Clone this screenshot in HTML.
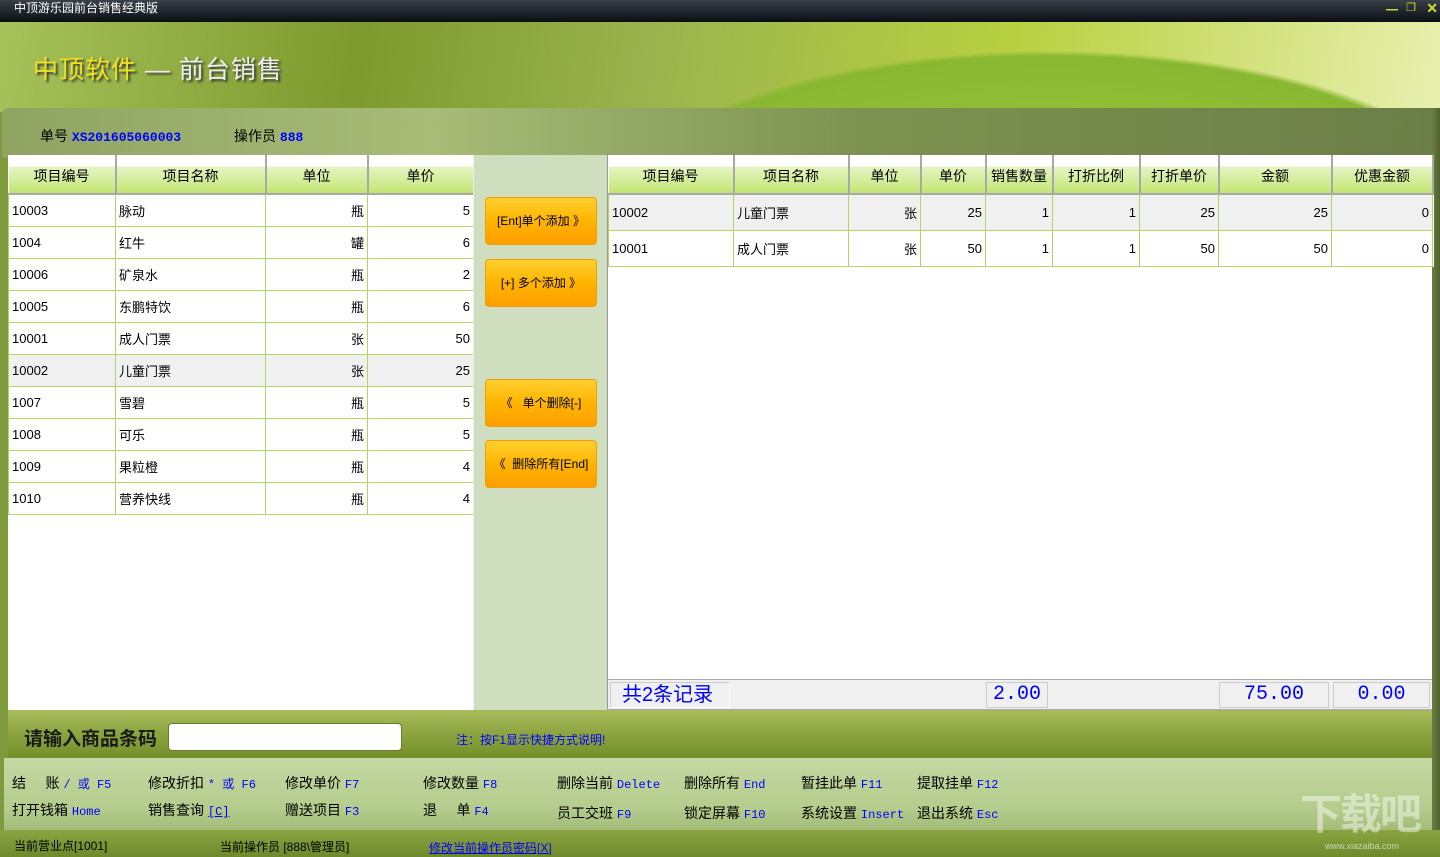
<!DOCTYPE html>
<html><head><meta charset="utf-8"><style>
*{margin:0;padding:0;box-sizing:border-box}
body{width:1440px;height:857px;overflow:hidden;position:relative;font-family:"Liberation Sans","Noto Sans CJK SC","WenQuanYi Zen Hei",sans-serif;font-size:14px;color:#000;background:#7d9a3c}
.a{position:absolute}
.title{left:0;top:0;width:1440px;height:22px;background:linear-gradient(#3a4048,#0a0e14);color:#fff;font-size:12px;line-height:16px;padding-left:14px}
.banner{left:0;top:22px;width:1440px;height:90px;background:radial-gradient(ellipse 700px 260px at 1050px 190px,#9cc83c 0,#8ab832 60%,transparent 62%),linear-gradient(100deg,#a6c25a 0,#7d9a2e 25%,#9bb34e 45%,#b8d040 70%,#e8f0b0 100%)}
.panel{left:2px;top:108px;width:1436px;height:50px;background:linear-gradient(90deg,#8ea460,#a8bc78 30%,#7d9250 60%,#6c7e48 100%);border-radius:6px 6px 0 0}
table{border-collapse:collapse;table-layout:fixed;position:absolute;background:#fff}
td{border:1px solid #b4d464;border-top:0;padding:0 3px;font-size:13px;white-space:nowrap;overflow:hidden}
th{font-weight:normal;font-size:14px;height:39px;border-right:2px solid #a8a8a8;background:linear-gradient(#fff 0,#fff 11px,#e4f4c4 12px,#cdea8c 30px,#c0e46c 39px);padding-top:4px;border-bottom:2px solid #a8a8a8}
.r{text-align:right}
.btn{position:absolute;left:485px;width:112px;height:48px;border:1px solid #f0a000;border-radius:4px;background:linear-gradient(#ffd030,#ffb400 50%,#ff9e00);font-size:12px;text-align:center;line-height:46px}
.sc{position:absolute;font-size:14px;white-space:nowrap}
.k{color:#0000ff;font-family:"Liberation Mono","Noto Sans CJK SC",monospace;font-size:12px}
</style></head><body>
<div class="a title">中顶游乐园前台销售经典版</div>
<div class="a" style="right:42px;top:1px;color:#c8e030;font-size:12px;font-weight:bold">━</div>
<div class="a" style="right:24px;top:1px;color:#c8e030;font-size:11px">❐</div>
<div class="a" style="right:2px;top:0;color:#c8e030;font-size:14px;font-weight:bold">✕</div>
<div class="a banner"></div>
<div class="a" style="left:33px;top:50px;font-size:25px;color:#f0e020;text-shadow:2px 2px 2px #333;letter-spacing:1px">中顶软件 <span style="color:#eee">— 前台销售</span></div>
<div class="a panel"></div>
<div class="a" style="left:1432px;top:108px;width:8px;height:722px;background:linear-gradient(90deg,#6a7e40,#506030)"></div>
<div class="a" style="left:40px;top:126px;font-size:14px">单号 <b style="color:#0000ff;font-family:'Liberation Mono',monospace;font-size:13px">XS201605060003</b></div>
<div class="a" style="left:234px;top:126px;font-size:14px">操作员 <b style="color:#0000ff;font-family:'Liberation Mono',monospace;font-size:13px">888</b></div>

<div class="a" style="left:8px;top:155px;width:465px;height:555px;background:#fff"></div>
<table style="left:8px;top:155px;width:465px">
<colgroup><col style="width:107px"><col style="width:150px"><col style="width:102px"><col style="width:106px"></colgroup>
<tr><th>项目编号</th><th>项目名称</th><th>单位</th><th>单价</th></tr>
<tr style="height:32px"><td>10003</td><td>脉动</td><td class="r">瓶</td><td class="r">5</td></tr>
<tr style="height:32px"><td>1004</td><td>红牛</td><td class="r">罐</td><td class="r">6</td></tr>
<tr style="height:32px"><td>10006</td><td>矿泉水</td><td class="r">瓶</td><td class="r">2</td></tr>
<tr style="height:32px"><td>10005</td><td>东鹏特饮</td><td class="r">瓶</td><td class="r">6</td></tr>
<tr style="height:32px"><td>10001</td><td>成人门票</td><td class="r">张</td><td class="r">50</td></tr>
<tr style="height:32px;background:#f0f0f0"><td>10002</td><td>儿童门票</td><td class="r">张</td><td class="r">25</td></tr>
<tr style="height:32px"><td>1007</td><td>雪碧</td><td class="r">瓶</td><td class="r">5</td></tr>
<tr style="height:32px"><td>1008</td><td>可乐</td><td class="r">瓶</td><td class="r">5</td></tr>
<tr style="height:32px"><td>1009</td><td>果粒橙</td><td class="r">瓶</td><td class="r">4</td></tr>
<tr style="height:32px"><td>1010</td><td>营养快线</td><td class="r">瓶</td><td class="r">4</td></tr>
</table>

<div class="a" style="left:473px;top:155px;width:135px;height:555px;background:#d0dec0;border-left:1px solid #eee;border-right:1px solid #999"></div>
<div class="btn" style="top:197px">[Ent]单个添加 》</div>
<div class="btn" style="top:259px">[+] 多个添加 》</div>
<div class="btn" style="top:379px">《 &nbsp; 单个删除[-]</div>
<div class="btn" style="top:440px">《 &nbsp;删除所有[End]</div>

<div class="a" style="left:608px;top:155px;width:824px;height:555px;background:#fff"></div>
<table style="left:608px;top:155px;width:824px">
<colgroup><col style="width:125px"><col style="width:115px"><col style="width:72px"><col style="width:65px"><col style="width:67px"><col style="width:87px"><col style="width:79px"><col style="width:113px"><col style="width:101px"></colgroup>
<tr><th>项目编号</th><th>项目名称</th><th>单位</th><th>单价</th><th>销售数量</th><th>打折比例</th><th>打折单价</th><th>金额</th><th>优惠金额</th></tr>
<tr style="height:36px;background:#f0f0f0"><td>10002</td><td>儿童门票</td><td class="r">张</td><td class="r">25</td><td class="r">1</td><td class="r">1</td><td class="r">25</td><td class="r">25</td><td class="r">0</td></tr>
<tr style="height:36px"><td>10001</td><td>成人门票</td><td class="r">张</td><td class="r">50</td><td class="r">1</td><td class="r">1</td><td class="r">50</td><td class="r">50</td><td class="r">0</td></tr>
</table>
<div class="a" style="left:608px;top:679px;width:824px;height:31px;background:#f0f0f0;border-top:1px solid #aaa;border-bottom:1px solid #aaa"></div>
<div class="a" style="left:610px;top:682px;width:120px;height:26px;border:1px solid #ccc;border-right-color:#fff;border-bottom-color:#fff;color:#0000ff;font-size:20px;line-height:24px;padding-left:11px">共2条记录</div>
<div class="a" style="left:986px;top:682px;width:62px;height:26px;border:1px solid #ccc;color:#0000ff;font-size:20px;line-height:24px;text-align:center;font-family:'Liberation Mono',monospace">2.00</div>
<div class="a" style="left:1219px;top:682px;width:110px;height:26px;border:1px solid #ccc;color:#0000ff;font-size:20px;line-height:24px;text-align:center;font-family:'Liberation Mono',monospace">75.00</div>
<div class="a" style="left:1333px;top:682px;width:97px;height:26px;border:1px solid #ccc;color:#0000ff;font-size:20px;line-height:24px;text-align:center;font-family:'Liberation Mono',monospace">0.00</div>

<div class="a" style="left:8px;top:710px;width:1424px;height:48px;background:linear-gradient(#a8bc5c,#8ca440 50%,#73902a)"></div>
<div class="a" style="left:24px;top:724px;font-size:19px;font-weight:bold;color:#1a1a1a">请输入商品条码</div>
<div class="a" style="left:168px;top:723px;width:234px;height:28px;background:#fff;border-radius:4px;border:1px solid #6a7a30"></div>
<div class="a" style="left:456px;top:731px;font-size:12px;color:#0000ff">注：按F1显示快捷方式说明!</div>

<div class="a" style="left:4px;top:758px;width:1428px;height:72px;background:linear-gradient(#c4d8a4,#b4cc8c 70%,#a4bc78)"></div>
<div class="sc" style="left:12px;top:773px">结 &nbsp; &nbsp; 账 <span class="k">/ 或 F5</span></div>
<div class="sc" style="left:148px;top:773px">修改折扣 <span class="k">* 或 F6</span></div>
<div class="sc" style="left:285px;top:773px">修改单价 <span class="k">F7</span></div>
<div class="sc" style="left:423px;top:773px">修改数量 <span class="k">F8</span></div>
<div class="sc" style="left:557px;top:773px">删除当前 <span class="k">Delete</span></div>
<div class="sc" style="left:684px;top:773px">删除所有 <span class="k">End</span></div>
<div class="sc" style="left:801px;top:773px">暂挂此单 <span class="k">F11</span></div>
<div class="sc" style="left:917px;top:773px">提取挂单 <span class="k">F12</span></div>
<div class="sc" style="left:12px;top:800px">打开钱箱 <span class="k">Home</span></div>
<div class="sc" style="left:148px;top:800px">销售查询 <span class="k" style="text-decoration:underline">[C]</span></div>
<div class="sc" style="left:285px;top:800px">赠送项目 <span class="k">F3</span></div>
<div class="sc" style="left:423px;top:800px">退 &nbsp; &nbsp; 单 <span class="k">F4</span></div>
<div class="sc" style="left:557px;top:803px">员工交班 <span class="k">F9</span></div>
<div class="sc" style="left:684px;top:803px">锁定屏幕 <span class="k">F10</span></div>
<div class="sc" style="left:801px;top:803px">系统设置 <span class="k">Insert</span></div>
<div class="sc" style="left:917px;top:803px">退出系统 <span class="k">Esc</span></div>

<div class="a" style="left:0;top:830px;width:1440px;height:27px;background:linear-gradient(#8aa440,#6e8a2c)"></div>
<div class="a" style="left:1300px;top:792px;font-size:42px;line-height:46px;font-weight:bold;color:rgba(255,255,255,0.45);letter-spacing:-2px">下载吧</div>
<div class="a" style="left:1325px;top:841px;font-size:9px;color:rgba(255,255,255,0.6)">www.xiazaiba.com</div>
<div class="a" style="left:14px;top:837px;font-size:12px">当前营业点[1001]</div>
<div class="a" style="left:220px;top:838px;font-size:12px">当前操作员 [888\管理员]</div>
<div class="a" style="left:429px;top:839px;font-size:12px;color:#0000ff;text-decoration:underline">修改当前操作员密码[X]</div>
</body></html>
